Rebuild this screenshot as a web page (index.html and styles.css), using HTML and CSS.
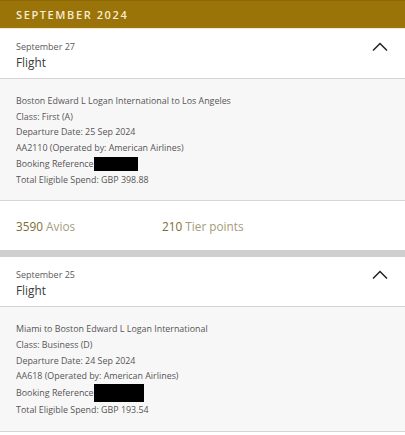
FILE: index.html
```html
<!DOCTYPE html>
<html>
<head>
<meta charset="utf-8">
<link rel="stylesheet" href="styles.css">
</head>
<body>
<div class="month">SEPTEMBER 2024</div>

<section class="card">
  <div class="card-head">
    <div>
      <div class="date">September 27</div>
      <div class="type">Flight</div>
    </div>
    <svg class="chev" width="16" height="9" viewBox="0 0 16 9"><path d="M1 8.5 L8 1.5 L15 8.5" fill="none" stroke="#222" stroke-width="1.5"/></svg>
  </div>
  <div class="details">
    <div>Boston Edward L Logan International to Los Angeles</div>
    <div>Class: First (A)</div>
    <div>Departure Date: 25 Sep 2024</div>
    <div>AA2110 (Operated by: American Airlines)</div>
    <div class="ref">Booking Reference<span class="redact r1"></span></div>
    <div>Total Eligible Spend: GBP 398.88</div>
  </div>
  <div class="points">
    <div class="pt"><span class="num">3590</span> Avios</div>
    <div class="pt"><span class="num">210</span> Tier points</div>
  </div>
</section>

<div class="sep"></div>

<section class="card">
  <div class="card-head">
    <div>
      <div class="date">September 25</div>
      <div class="type">Flight</div>
    </div>
    <svg class="chev" width="16" height="9" viewBox="0 0 16 9"><path d="M1 8.5 L8 1.5 L15 8.5" fill="none" stroke="#222" stroke-width="1.5"/></svg>
  </div>
  <div class="details">
    <div>Miami to Boston Edward L Logan International</div>
    <div>Class: Business (D)</div>
    <div>Departure Date: 24 Sep 2024</div>
    <div>AA618 (Operated by: American Airlines)</div>
    <div class="ref">Booking Reference<span class="redact r2"></span></div>
    <div>Total Eligible Spend: GBP 193.54</div>
  </div>
</section>
</body>
</html>
```

FILE: styles.css
```css
html, body {
  margin: 0;
  padding: 0;
  background: #ffffff;
}
body {
  font-family: "Open Sans", "Liberation Sans", sans-serif;
  width: 405px;
  overflow: hidden;
}
.month {
  height: 29px;
  box-sizing: border-box;
  background: #9a7408;
  border-top: 1px solid #8a6806;
  border-bottom: 1px solid #f3ead0;
  color: #f6ecd2;
  font-size: 11px;
  font-weight: 600;
  letter-spacing: 1.6px;
  line-height: 27px;
  padding-left: 16px;
}
.card-head {
  display: flex;
  justify-content: space-between;
  align-items: flex-start;
  padding: 11px 17px 0 16px;
  height: 50px;
  box-sizing: border-box;
  border-bottom: 1px solid #d6d6d6;
}
.date {
  font-size: 9px;
  color: #5a5a5a;
  line-height: 13px;
}
.type {
  font-size: 11.8px;
  color: #3a3a3a;
  line-height: 18px;
}
.chev {
  margin-top: 2px;
}
.details {
  background: #f8f7f8;
  padding: 14px 16px 13px;
  font-size: 8.9px;
  line-height: 15.7px;
  color: #555;
  border-bottom: 1px solid #d6d6d6;
}
.ref {
  display: flex;
  align-items: center;
}
.redact {
  display: inline-block;
  background: #000;
}
.r1 { width: 44px; height: 14px; }
.r2 { width: 50px; height: 18px; }
.points {
  display: flex;
  height: 49px;
  align-items: center;
  padding-left: 16px;
  font-size: 11.8px;
  color: #a59c7c;
}
.pt:first-child { width: 146px; }
.num { color: #7d6d33; }
.sep {
  height: 7px;
  background: #cfcfcf;
}
```
